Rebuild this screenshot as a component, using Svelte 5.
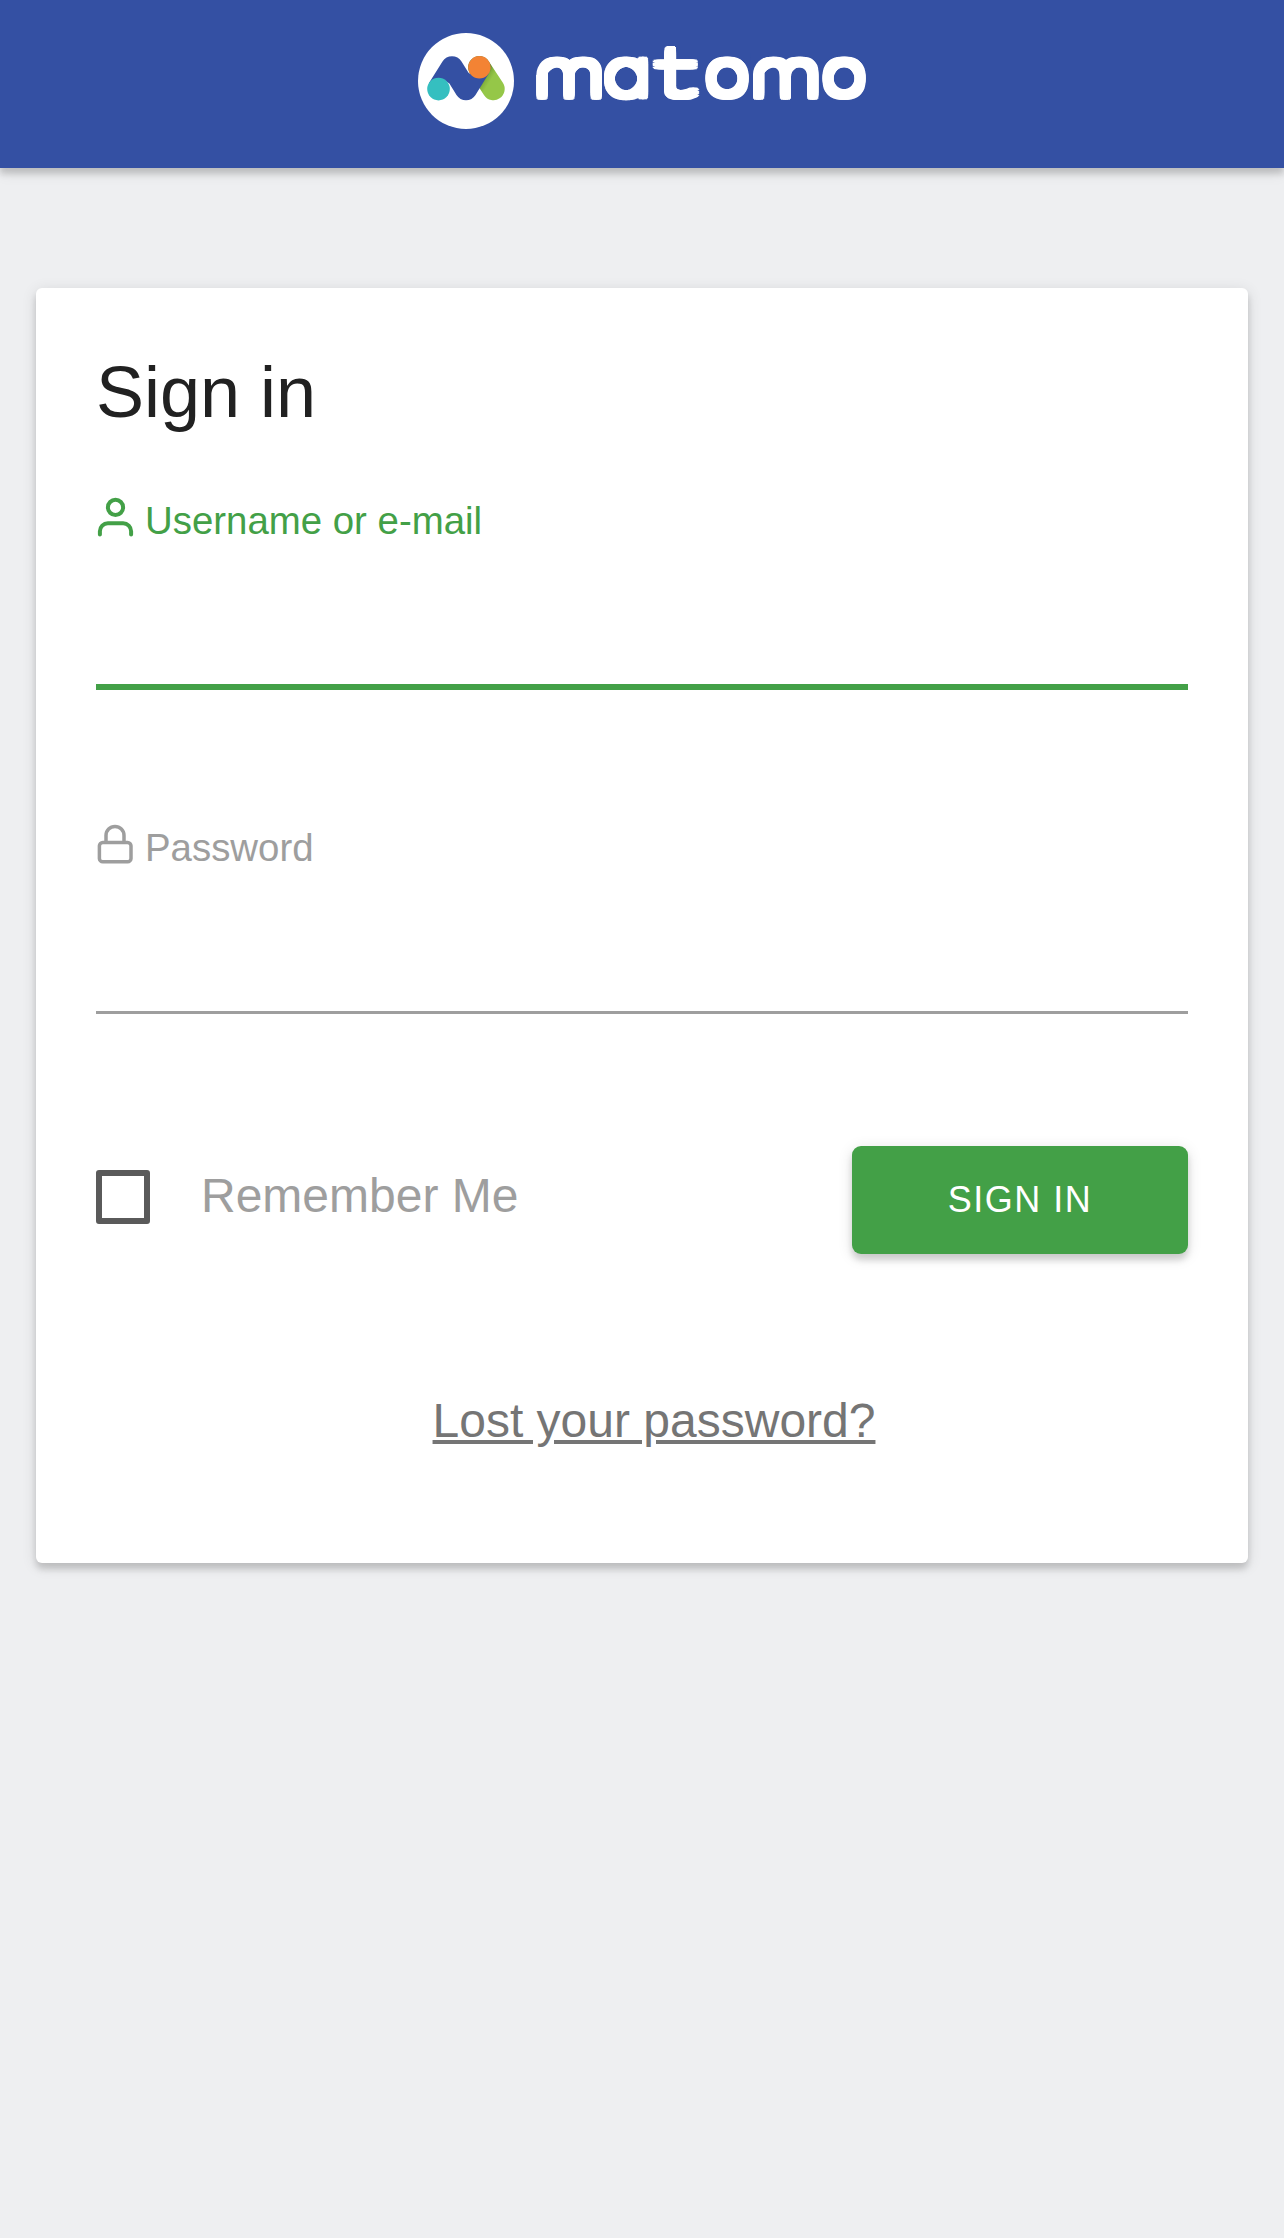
<script lang="ts">
  let username = $state('');
  let password = $state('');
  let remember = $state(false);

  // Wordmark letters, each widened to the logo's round proportions.
  const letters = [
    { glyph: 'm', x: 569, stretch: 1.33, kind: 'soft' },
    { glyph: 'a', x: 627.6, stretch: 1.36, kind: 'open' },
    { glyph: 't', x: 675.2, stretch: 2, kind: 'tee' },
    { glyph: 'o', x: 727, stretch: 1.14, kind: 'soft' },
    { glyph: 'm', x: 785.5, stretch: 1.33, kind: 'soft' },
    { glyph: 'o', x: 844, stretch: 1.14, kind: 'soft' }
  ];

  // Rings of offsets that thicken the hairline letters with a round pen.
  const spread = [1.6, 3, 4.4].flatMap((r) =>
    Array.from({ length: 20 }, (_, i) => ({
      dx: r * Math.cos((i * Math.PI) / 10),
      dy: r * Math.sin((i * Math.PI) / 10)
    }))
  );
</script>

<header>
  <svg class="logo" viewBox="416 12 452 118" role="img" aria-label="matomo">
    <defs>
      <linearGradient id="leaf" gradientUnits="userSpaceOnUse" x1="481" y1="78" x2="489" y2="83">
        <stop offset="0" stop-color="#557a2c" />
        <stop offset="0.55" stop-color="#83b33d" />
        <stop offset="1" stop-color="#95c748" />
      </linearGradient>
      <filter
        id="thicken"
        filterUnits="userSpaceOnUse"
        x="520"
        y="12"
        width="352"
        height="118"
        color-interpolation-filters="sRGB"
      >
        {#each spread as s, i}
          <feOffset in="SourceGraphic" dx={s.dx} dy={s.dy} result="o{i}" />
        {/each}
        <feMerge>
          <feMergeNode in="SourceGraphic" />
          {#each spread as _, i}
            <feMergeNode in="o{i}" />
          {/each}
        </feMerge>
      </filter>
    </defs>
    <circle cx="466" cy="81" r="48" fill="#fff" />
    <path class="leaf" d="M479.3 67.3 493.5 89" stroke="url(#leaf)" />
    <path
      d="M438.5 89 429 83.1 442.5 61.4A11.2 11.2 0 0 1 461.5 61.4L468.5 72.8 473.9 76.4 479.4 67.3 488.9 73.2 475.5 95.1A11.2 11.2 0 0 1 456.5 95.1L449.4 83.6 444 80Z"
      fill="#3450a3"
    />
    <circle cx="438.5" cy="89.1" r="11.3" fill="#35bfc0" />
    <circle cx="479.4" cy="67.3" r="11.2" fill="#f38334" />
    <g filter="url(#thicken)">
      {#each letters as l}
        <text class="wordmark {l.kind}" transform="translate({l.x} 95.4) scale({l.stretch} 1)">{l.glyph}</text>
      {/each}
    </g>
    <!-- Round off the left shoulder of each m -->
    <path class="shoulder" d="M534 53V75H536.3A19 19 0 0 1 555.3 56V53Z" />
    <path class="shoulder" d="M750.6 53V75H752.9A19 19 0 0 1 771.9 56V53Z" />
  </svg>
</header>

<main>
  <form onsubmit={(e) => e.preventDefault()}>
    <h1>Sign in</h1>

    <label class="active" for="login">
      <svg viewBox="96 497 48 48">
        <circle cx="115.5" cy="507.4" r="7.6" />
        <path d="M99.9 534.4v-3.2a8 8 0 0 1 8-8h15.2a8 8 0 0 1 8 8v3.2" />
      </svg>
      <span>Username or e-mail</span>
    </label>
    <input class="field focused" id="login" type="text" bind:value={username} />

    <label class="second" for="pass">
      <svg class="lock" viewBox="96 824 48 48">
        <rect x="99.4" y="842.4" width="31.6" height="19.4" rx="3.4" />
        <path d="M106 842v-6.6a9 9 0 0 1 18 0v6.6" />
      </svg>
      <span>Password</span>
    </label>
    <input class="field plain" id="pass" type="password" bind:value={password} />

    <div class="actions">
      <label class="remember">
        <input type="checkbox" bind:checked={remember} />
        <span>Remember Me</span>
      </label>
      <button type="submit">SIGN IN</button>
    </div>

    <p class="lost"><a href="#lost">Lost your password?</a></p>
  </form>
</main>

<style>
  :global(body) {
    background: #eeeff1;
    font-family: 'Liberation Sans', Arial, sans-serif;
  }
  * {
    box-sizing: border-box;
  }
  header {
    height: 168px;
    padding-top: 12px;
    display: flex;
    justify-content: center;
    align-items: flex-start;
    background: #3450a3;
  }
  header,
  form,
  button {
    box-shadow: 0 6px 6px rgba(0, 0, 0, 0.14), 0 3px 15px rgba(0, 0, 0, 0.12);
  }
  .logo {
    width: 452px;
    height: 118px;
  }
  .leaf {
    fill: none;
    stroke-width: 22.4;
    stroke-linecap: round;
  }
  .shoulder {
    fill: #3450a3;
  }
  .wordmark {
    font-family: Lato, sans-serif;
    font-size: 68px;
    font-weight: 100;
    text-anchor: middle;
    fill: #fff;
    stroke: #fff;
    stroke-width: 1.5;
  }
  .open {
    font-family: Inter, sans-serif;
    font-feature-settings: 'cv11';
    font-size: 62px;
    stroke-width: 0.3;
  }
  .tee {
    font-size: 65px;
    stroke-width: 1.2;
  }
  main {
    min-height: 2070px;
    padding: 120px 36px 0;
  }
  form {
    height: 1275px;
    padding: 60px;
    display: flex;
    flex-direction: column;
    background: #fff;
    border-radius: 6px;
  }
  h1 {
    margin: 0 0 61px;
    font-size: 72px;
    font-weight: 400;
    line-height: 88px;
    color: #212121;
  }
  label {
    display: flex;
    align-items: center;
    height: 48px;
    font-size: 38.4px;
    line-height: 48px;
    color: #9e9e9e;
  }
  label.active {
    color: #43a047;
  }
  label.second {
    margin-top: 134px;
  }
  label svg {
    width: 48px;
    height: 48px;
    margin-right: 1px;
    fill: none;
    stroke: currentColor;
    stroke-width: 4;
    stroke-linecap: round;
    stroke-linejoin: round;
  }
  label svg.lock {
    stroke-width: 3.5;
  }
  .field {
    width: 100%;
    margin: 0;
    padding: 0;
    border: 0;
    border-radius: 0;
    outline: 0;
    background: transparent;
    font: 48px 'Liberation Sans', Arial, sans-serif;
  }
  .focused {
    height: 145px;
    border-bottom: 6px solid #43a047;
  }
  .plain {
    height: 142px;
    border-bottom: 3px solid #9e9e9e;
  }
  .actions {
    display: flex;
    justify-content: space-between;
    margin-top: 132px;
  }
  .remember {
    height: 102px;
    gap: 51px;
    font-size: 48px;
  }
  .remember span {
    padding-bottom: 3px;
  }
  .remember input {
    appearance: none;
    width: 54px;
    height: 54px;
    margin: 0;
    border: 6px solid #5a5a5a;
    border-radius: 3px;
  }
  .remember input:checked {
    background: #43a047;
  }
  button {
    width: 336px;
    height: 108px;
    padding: 0;
    border: 0;
    border-radius: 9px;
    background: #43a047;
    color: #fff;
    font: 36px/108px 'Liberation Sans', Arial, sans-serif;
    letter-spacing: 1.5px;
  }
  .lost {
    margin: 137px 0 0;
    padding-left: 24px;
    text-align: center;
    font-size: 48px;
    line-height: 60px;
  }
  .lost a {
    color: #757575;
    text-decoration: underline;
  }
</style>
